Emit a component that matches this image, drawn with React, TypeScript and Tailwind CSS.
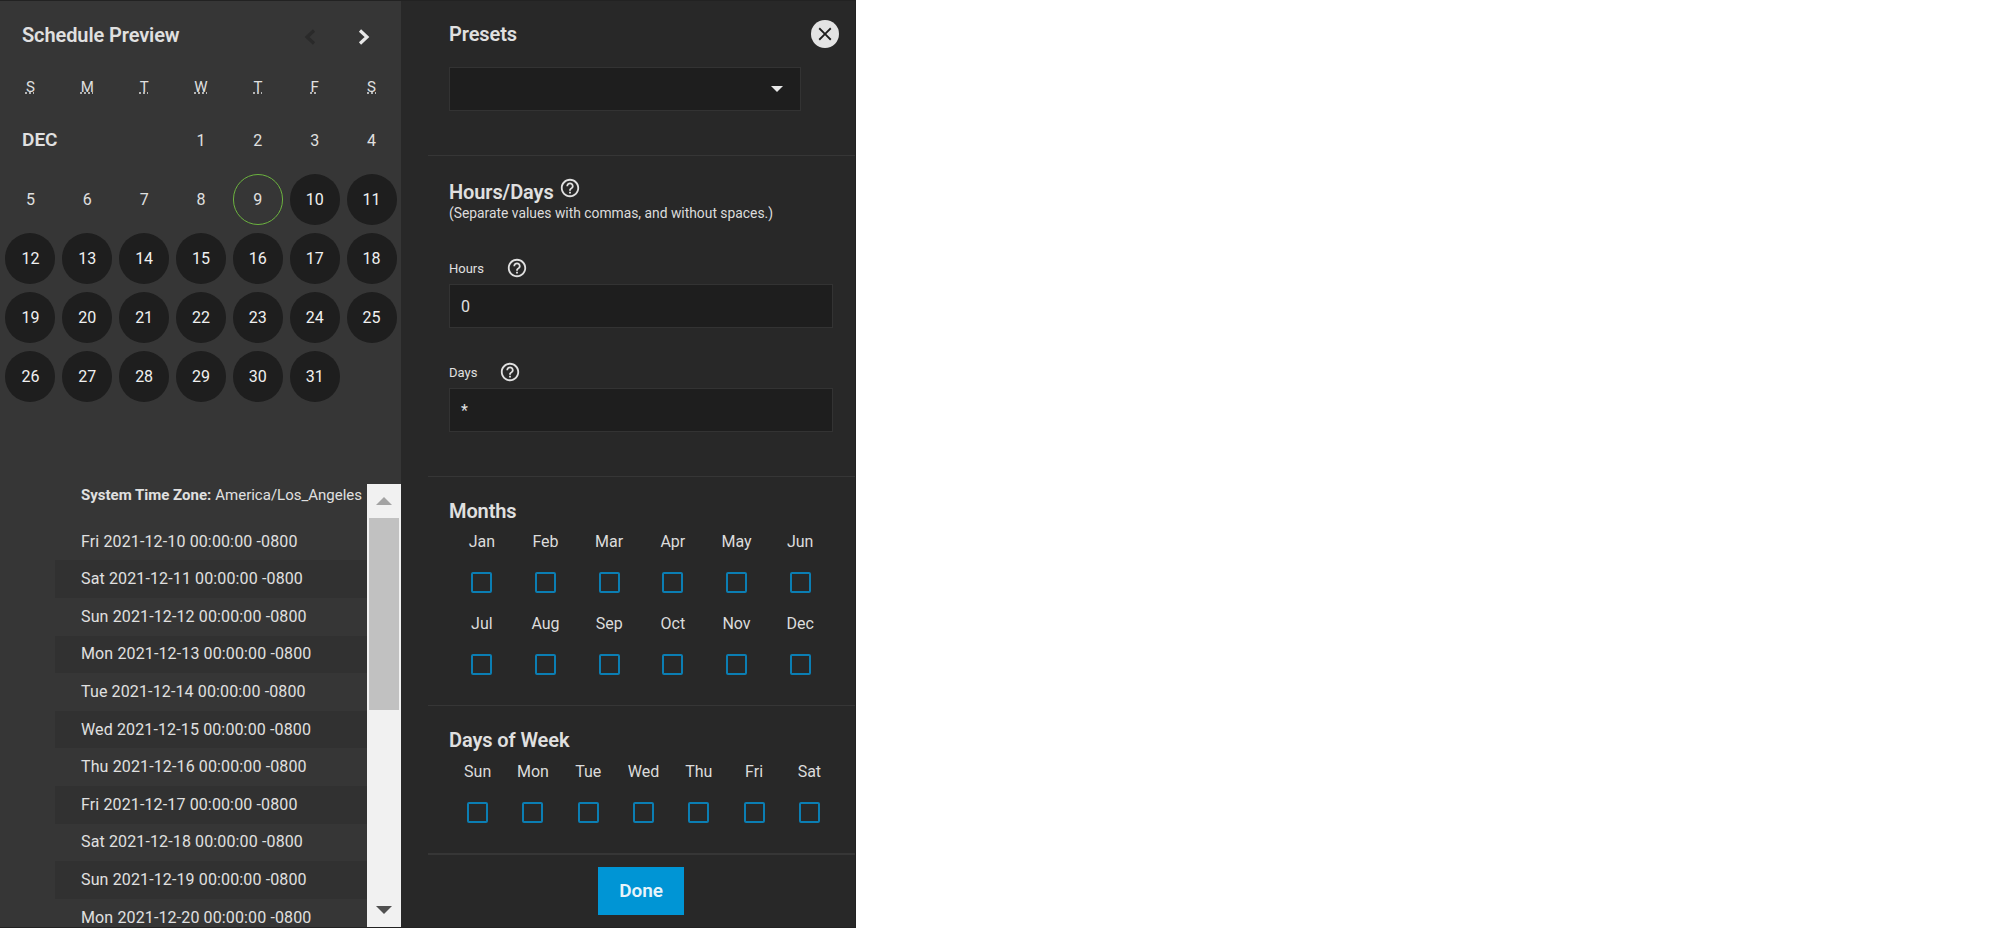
import React from 'react';

const WEEK_HEAD = ['S', 'M', 'T', 'W', 'T', 'F', 'S'];
const WEEK_TITLES = ['Sunday', 'Monday', 'Tuesday', 'Wednesday', 'Thursday', 'Friday', 'Saturday'];
const MONTHS = ['Jan', 'Feb', 'Mar', 'Apr', 'May', 'Jun', 'Jul', 'Aug', 'Sep', 'Oct', 'Nov', 'Dec'];
const DAYS = ['Sun', 'Mon', 'Tue', 'Wed', 'Thu', 'Fri', 'Sat'];
const SCHEDULE = [
  'Fri 2021-12-10', 'Sat 2021-12-11', 'Sun 2021-12-12', 'Mon 2021-12-13', 'Tue 2021-12-14', 'Wed 2021-12-15',
  'Thu 2021-12-16', 'Fri 2021-12-17', 'Sat 2021-12-18', 'Sun 2021-12-19', 'Mon 2021-12-20',
];

const HELP = 'M11 18h2v-2h-2v2zm1-16C6.48 2 2 6.48 2 12s4.48 10 10 10 10-4.48 10-10S17.52 2 12 2zm0 18c-4.41 0-8-3.59-8-8s3.59-8 8-8 8 3.59 8 8-3.59 8-8 8zm0-14c-2.21 0-4 1.79-4 4h2c0-1.1.9-2 2-2s2 .9 2 2c0 2-3 1.75-3 5h2c0-2.25 3-2.5 3-5 0-2.21-1.79-4-4-4z';

const HelpIcon = ({ size }: { size: number }) => (
  <svg width={size} height={size} viewBox="0 0 24 24" fill="#e0e0e0"><path d={HELP} /></svg>
);

const Chevron = ({ flip, color }: { flip?: boolean; color: string }) => (
  <svg width="30" height="30" viewBox="0 0 30 30" fill="none" stroke={color} strokeWidth="3.2" className={flip ? 'rotate-180' : ''}>
    <polyline points="11,8.5 18,15 11,21.5" />
  </svg>
);

const DayCell = ({ day }: { day: number }) => {
  if (day <= 8) {
    return <div className="flex h-[59px] items-center justify-center text-[16px]">{day}</div>;
  }
  return (
    <div className="flex h-[59px] items-center justify-center">
      <div className={day === 9
        ? 'flex h-[51px] w-[50px] items-center justify-center rounded-full border border-[#6cb33f] text-[16px]'
        : 'flex h-[51px] w-[50px] items-center justify-center rounded-full bg-[#1e1e1e] text-[16px] text-[#f0f0f0]'}>
        {day}
      </div>
    </div>
  );
};

const Checkbox = () => <div className="h-[21px] w-[21px] rounded-[2px] border-2 border-[#0b7eb3]" />;

const CheckGrid = ({ items, cols }: { items: string[]; cols: string }) => (
  <div className={cols}>
    {items.map((item) => (
      <div key={item} className="flex h-[82px] flex-col items-center text-[16px] text-[#dcdcdc]">
        <span className="mt-[3px] leading-[19px]">{item}</span>
        <div className="mt-[21px]"><Checkbox /></div>
      </div>
    ))}
  </div>
);

export default function App() {
  const days = Array.from({ length: 31 }, (_, i) => i + 1);

  return (
    <div className="h-[928px] w-[2000px] overflow-hidden bg-white font-['Roboto',sans-serif] text-[#e0e0e0]">
      <div className="flex h-[928px] w-[856px] border-y border-r border-[#222]">
        {/* preview side */}
        <div className="flex w-[401px] shrink-0 flex-col overflow-hidden bg-[#363636]">
          <div className="flex h-[67px] shrink-0 items-center pl-[22px] pt-[1px]">
            <h2 className="text-[20px] font-semibold tracking-[-0.1px]">Schedule Preview</h2>
            <div className="ml-auto mt-[3px] flex pr-[22px]">
              <Chevron flip color="#2a2a2a" />
              <div className="ml-[24px]"><Chevron color="#e8e8e8" /></div>
            </div>
          </div>
          <div className="ml-[2px] grid h-[43px] w-[398px] shrink-0 grid-cols-7 items-center pb-[5px] text-center text-[15px]">
            {WEEK_HEAD.map((d, i) => (
              <abbr key={i} title={WEEK_TITLES[i]} className="underline decoration-dotted">{d}</abbr>
            ))}
          </div>
          <div className="ml-[2px] grid w-[398px] shrink-0 grid-cols-7">
            <div className="col-span-3 flex h-[59px] items-center pl-[20px] text-[19px] font-semibold">DEC</div>
            {days.map((d) => <DayCell key={d} day={d} />)}
          </div>
          <div className="mt-[78px] flex min-h-0 flex-1 pl-[55px]">
            <div className="min-w-0 flex-1 overflow-hidden">
              <div className="mb-[16.8px] flex h-[22px] items-center whitespace-nowrap pl-[26px] text-[15px]">
                <strong className="mr-1 font-bold">System Time Zone:</strong>America/Los_Angeles
              </div>
              {SCHEDULE.map((s, i) => (
                <div key={s} className={i % 2 === 1
                  ? 'flex h-[37.6px] items-center bg-[#313131] pl-[26px] text-[16px] tracking-[0.13px]'
                  : 'flex h-[37.6px] items-center pl-[26px] text-[16px] tracking-[0.13px]'}>
                  {s} 00:00:00 -0800
                </div>
              ))}
            </div>
            {/* scrollbar */}
            <div className="flex w-[34px] shrink-0 flex-col items-center bg-[#f1f1f1]">
              <div className="flex h-[34px] items-center justify-center">
                <div className="h-0 w-0 border-x-[8px] border-b-[8px] border-x-transparent border-b-[#a3a3a3]" />
              </div>
              <div className="h-[192px] w-[30px] bg-[#c1c1c1]" />
              <div className="mt-auto flex h-[38px] items-start justify-center pt-[17px]">
                <div className="h-0 w-0 border-x-[8px] border-t-[8px] border-x-transparent border-t-[#505050]" />
              </div>
            </div>
          </div>
        </div>

        {/* form side */}
        <div className="relative flex-1 bg-[#282828] pl-[27px]">
          <button className="absolute right-[16px] top-[19px] flex h-[28px] w-[28px] items-center justify-center rounded-full bg-[#e4e4e4]">
            <svg width="22" height="22" viewBox="0 0 24 24" fill="#1e1e1e"><path d="M19 6.41L17.59 5 12 10.59 6.41 5 5 6.41 10.59 12 5 17.59 6.41 19 12 13.41 17.59 19 19 17.59 13.41 12z" /></svg>
          </button>

          <section className="h-[155px] border-b border-[#363636] pl-[21px]">
            <h3 className="pt-[21px] text-[20px] font-semibold leading-[24px] tracking-[-0.1px]">Presets</h3>
            <div className="mt-[21px] flex h-[44px] w-[352px] items-center justify-end border border-[#333] bg-[#1e1e1e] pr-[17px]">
              <div className="h-0 w-0 border-x-[6px] border-t-[6px] border-x-transparent border-t-[#e8e8e8]" />
            </div>
          </section>

          <section className="h-[321px] border-b border-[#363636] pl-[21px]">
            <div className="flex items-start pt-[24px]">
              <h3 className="text-[20px] font-semibold leading-[24px] tracking-[-0.1px]">Hours/Days</h3>
              <div className="ml-[5px] -mt-[3px]"><HelpIcon size={22} /></div>
            </div>
            <p className="mt-[1px] text-[13.85px] leading-[16px] text-[#dcdcdc]">(Separate values with commas, and without spaces.)</p>

            <div className="mt-[35px] flex h-[24px] items-center text-[13px]">
              <span className="w-[57px] pt-[1px]">Hours</span>
              <HelpIcon size={22} />
            </div>
            <div className="mt-[4px] flex h-[44px] w-[384px] items-center border border-[#333] bg-[#1e1e1e] pl-[11px] pt-[1px] text-[16px]">0</div>

            <div className="mt-[32px] flex h-[24px] items-center text-[13px]">
              <span className="w-[50px] pt-[1px]">Days</span>
              <HelpIcon size={22} />
            </div>
            <div className="mt-[4px] flex h-[44px] w-[384px] items-center border border-[#333] bg-[#1e1e1e] pl-[11px] pt-[1px] text-[16px]">*</div>
          </section>

          <section className="h-[229px] border-b border-[#363636] pl-[21px]">
            <h3 className="pt-[22px] text-[20px] font-semibold leading-[24px] tracking-[-0.1px]">Months</h3>
            <div className="ml-[1px] mt-[6px] w-[382px]">
              <CheckGrid items={MONTHS} cols="grid grid-cols-6" />
            </div>
          </section>

          <section className="h-[149px] border-b-2 border-[#363636] pl-[21px]">
            <h3 className="pt-[22px] text-[20px] font-semibold leading-[24px] tracking-[-0.1px]">Days of Week</h3>
            <div className="ml-[1px] mt-[7px] w-[387px]">
              <CheckGrid items={DAYS} cols="grid grid-cols-7" />
            </div>
          </section>

          <div className="flex justify-center pr-[1px] pt-[12px]">
            <button className="h-[48px] w-[86px] bg-[#0095d5] text-[19px] font-semibold tracking-[-0.1px] text-[#e8f4fa]">Done</button>
          </div>
        </div>
      </div>
    </div>
  );
}
